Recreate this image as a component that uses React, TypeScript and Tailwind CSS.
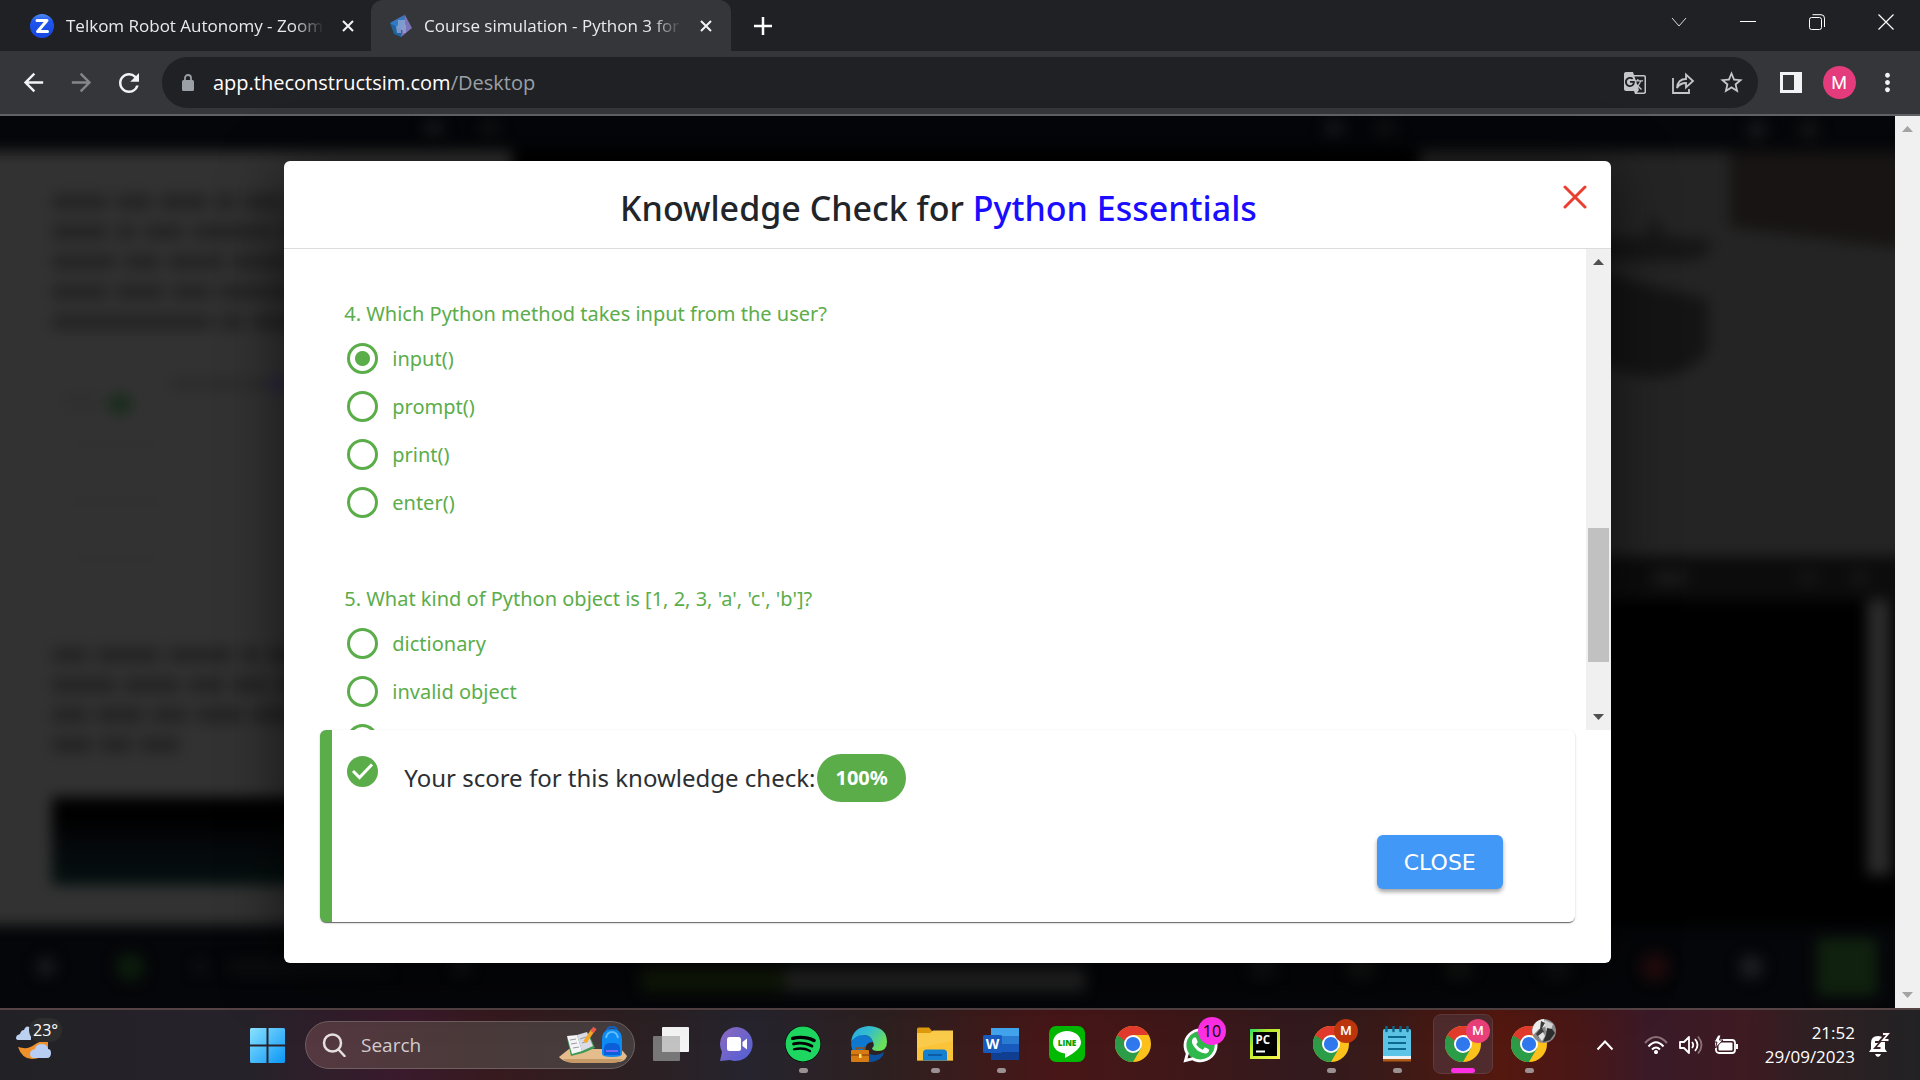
import React, { useState } from "react";
import {
  MdArrowBack,
  MdArrowForward,
  MdGTranslate,
  MdMoreVert,
  MdRefresh,
  MdStarBorder,
} from "react-icons/md";
import { FaSpotify, FaWhatsapp } from "react-icons/fa";

/* ---------- Browser chrome ---------- */

function TabClose({ label }: { label: string }) {
  return (
    <button type="button" aria-label={label} className="flex h-6 w-6 shrink-0 items-center justify-center">
      <svg viewBox="0 0 12 12" className="h-3 w-3" stroke="#f1f3f4" strokeWidth="2" fill="none">
        <path d="M1 1l10 10M11 1L1 11" />
      </svg>
    </button>
  );
}

function ZoomIcon() {
  return (
    <svg viewBox="0 0 24 24" className="h-6 w-6 shrink-0">
      <defs>
        <linearGradient id="zoomBlue" x1="0" y1="0" x2="0" y2="1">
          <stop offset="0" stopColor="#4f8df5" />
          <stop offset="0.3" stopColor="#1f55ee" />
          <stop offset="1" stopColor="#1747e0" />
        </linearGradient>
      </defs>
      <circle cx="12" cy="12" r="12" fill="url(#zoomBlue)" />
      <path d="M7 6.500h10l-9.400 11H17.500" fill="none" stroke="#fff" strokeWidth="3" strokeLinejoin="round" strokeLinecap="round" />
    </svg>
  );
}

function ConstructIcon() {
  return (
    <svg viewBox="0 0 24 24" className="h-6 w-6 shrink-0">
      <path d="M1 9L17 0l-7 5z" fill="#8a5fb8" />
      <path d="M1 9L16 1l-2 19-2 3z" fill="#2f7cc4" />
      <path d="M16 1l7 13-11 9z" fill="#7b74b8" />
      <path d="M1 9l4 11 7 3 1-7z" fill="#1f639f" />
      <path d="M9 6h7v5h1v8h-3v-3h-2v3H8l-1-6 2-2z" fill="#8ea4d2" opacity="0.8" />
    </svg>
  );
}

function TabStrip() {
  return (
    <div className="flex h-[51px] bg-[#202124] text-[17px] text-[#e8eaed]">
      <div className="flex w-[371px] items-center pl-[30px] pr-[11px]">
        <ZoomIcon />
        <span className="ml-3 flex-1 overflow-hidden whitespace-nowrap [mask-image:linear-gradient(to_right,black_88%,transparent)]">
          Telkom Robot Autonomy - Zoom
        </span>
        <span className="ml-3 flex">
          <TabClose label="Close Zoom tab" />
        </span>
      </div>
      <div className="flex w-[360px] items-center rounded-t-xl bg-[#35363a] pl-[18px] pr-[13px]">
        <ConstructIcon />
        <span className="ml-[11px] flex-1 overflow-hidden whitespace-nowrap [mask-image:linear-gradient(to_right,black_88%,transparent)]">
          Course simulation - Python 3 for
        </span>
        <span className="ml-3 flex">
          <TabClose label="Close course tab" />
        </span>
      </div>
      <button type="button" aria-label="New tab" className="flex w-16 items-center justify-center">
        <svg viewBox="0 0 18 18" className="h-[18px] w-[18px]" stroke="#fff" strokeWidth="2.500" fill="none">
          <path d="M9 0v18M0 9h18" />
        </svg>
      </button>
      <div className="ml-auto flex h-11 items-center">
        <button type="button" aria-label="Search tabs" className="flex w-[68px] justify-center">
          <svg viewBox="0 0 16 16" className="h-4 w-4" stroke="#ddd" fill="none">
            <path d="M1 4l7 8 7-8" />
          </svg>
        </button>
        <button type="button" aria-label="Minimize" className="flex w-[69px] justify-center">
          <svg viewBox="0 0 16 16" className="h-4 w-4" stroke="#fff" fill="none">
            <path d="M0 7.500h16" />
          </svg>
        </button>
        <button type="button" aria-label="Restore" className="flex w-[69px] justify-center">
          <svg viewBox="0 0 16 16" className="h-4 w-4" stroke="#fff" fill="none">
            <rect x="0.500" y="3.500" width="12" height="12" rx="2" />
            <path d="M3.500 0.700h8.500a3.500 3.500 0 0 1 3.500 3.500V13" />
          </svg>
        </button>
        <button type="button" aria-label="Close window" className="flex w-[69px] justify-center">
          <svg viewBox="0 0 16 16" className="h-4 w-4" stroke="#fff" strokeWidth="1.200" fill="none">
            <path d="M0.500 0.500l15 15M15.500 0.500l-15 15" />
          </svg>
        </button>
      </div>
    </div>
  );
}

function Toolbar() {
  return (
    <div className="flex h-[65px] items-center border-b-2 border-[#606164] bg-[#35363a] pl-[9px]">
      <button type="button" aria-label="Back" className="flex w-12 justify-center text-[#f1f3f4]">
        <MdArrowBack size={29} />
      </button>
      <button type="button" aria-label="Forward" className="flex w-12 justify-center text-[#85868a]">
        <MdArrowForward size={29} />
      </button>
      <button type="button" aria-label="Reload" className="flex w-12 justify-center text-[#f1f3f4]">
        <MdRefresh size={30} />
      </button>
      <div className="ml-[9px] flex h-[51px] flex-1 items-center rounded-full bg-[#202124] pl-5 pr-[3px]">
        <svg viewBox="0 0 12 17" className="h-[17px] w-3">
          <rect y="6" width="12" height="11" rx="1.500" fill="#9aa0a6" />
          <path d="M3 7V4a3 3 0 0 1 6 0v3" fill="none" stroke="#9aa0a6" strokeWidth="1.800" />
        </svg>
        <span className="ml-[19px] flex-1 text-[20px] text-[#9aa0a6]">
          <span className="text-white">app.theconstructsim.com</span>/Desktop
        </span>
        <button type="button" aria-label="Translate" className="flex w-12 justify-center text-[#c4c6c9]">
          <MdGTranslate size={24} />
        </button>
        <button type="button" aria-label="Share" className="flex w-12 justify-center">
          <svg viewBox="0 0 24 24" className="h-6 w-6" fill="none" stroke="#c4c6c9" strokeWidth="1.800">
            <path d="M2 7v15h16v-4" />
            <path d="M6 17c.5-6 4-9 9-9V3.500l7 6.500-7 6.500V12c-4 0-7 1.500-9 5z" />
          </svg>
        </button>
        <button type="button" aria-label="Bookmark" className="flex w-12 justify-center text-[#c4c6c9]">
          <MdStarBorder size={27} />
        </button>
      </div>
      <button type="button" aria-label="Side panel" className="ml-[9px] flex w-12 justify-center">
        <svg viewBox="0 0 22 21" className="h-[21px] w-[22px]">
          <rect width="22" height="21" fill="#f1f3f4" />
          <rect x="3" y="3" width="11" height="15" fill="#35363a" />
        </svg>
      </button>
      <button type="button" aria-label="Profile" className="flex w-12 justify-center">
        <span className="flex h-[33px] w-[33px] items-center justify-center rounded-full bg-[#e33b7b] font-['Roboto','Noto_Sans',sans-serif] text-[18px] text-white">
          M
        </span>
      </button>
      <button type="button" aria-label="Menu" className="mr-[9px] flex w-12 justify-center text-[#f1f3f4]">
        <MdMoreVert size={29} />
      </button>
    </div>
  );
}

/* ---------- Scroll bar ---------- */

function Arrow({ up, color }: { up?: boolean; color: string }) {
  return (
    <svg viewBox="0 0 11 6" className="h-[6px] w-[11px]" fill={color}>
      <path d={up ? "M0 6L5.500 0L11 6z" : "M0 0L5.500 6L11 0z"} />
    </svg>
  );
}

function ScrollBar({ color, thumb }: { color: string; thumb?: boolean }) {
  return (
    <div className="flex w-[25px] shrink-0 flex-col items-center justify-between bg-[#f0f0f0] py-[10px]">
      <Arrow up color={color} />
      {thumb && (
        <div className="flex w-full flex-1 flex-col items-center px-0.5">
          <div className="grow-[263]" />
          <div className="w-full grow-[134] bg-[#c1c1c1]" />
          <div className="grow-[52]" />
        </div>
      )}
      <Arrow color={color} />
    </div>
  );
}

/* ---------- Dimmed course page behind the dialog ---------- */

function Words({ rows }: { rows: string[][] }) {
  return (
    <div className="flex flex-col gap-[14px]">
      {rows.map((row, i) => (
        <div key={i} className="flex gap-2">
          {row.map((w, j) => (
            <div key={j} className={"h-4 rounded bg-[#242424] " + w} />
          ))}
        </div>
      ))}
    </div>
  );
}

function Dot({ className }: { className: string }) {
  return <div className={"shrink-0 rounded-full " + className} />;
}

function CoursePage() {
  return (
    <div aria-hidden="true" className="col-start-1 row-start-1 overflow-hidden bg-[#050609]">
      <div className="flex h-full flex-col blur-[7px]">
        <div className="flex h-[35px] items-start pt-1">
          <div className="flex w-[512px] justify-end gap-9 pr-3">
            <Dot className="h-4 w-5 bg-[#16171a]" />
            <Dot className="h-4 w-5 bg-[#101113]" />
          </div>
          <div className="flex flex-1 justify-end gap-8 pr-6">
            <Dot className="h-4 w-5 bg-[#16171a]" />
            <Dot className="h-4 w-5 bg-[#101113]" />
          </div>
          <div className="flex w-[475px] justify-end gap-8 pr-[76px]">
            <Dot className="h-5 w-5 bg-[#16171a]" />
            <Dot className="h-5 w-5 bg-[#131416]" />
          </div>
        </div>
        <div className="flex flex-1">
          <div className="-ml-4 flex w-[528px] flex-col bg-[#323232] pl-[68px] pt-[43px]">
            <Words
              rows={[
                ["w-14", "w-9", "w-12", "w-5", "w-9", "w-20"],
                ["w-14", "w-5", "w-10", "w-20", "w-9", "w-12"],
                ["w-16", "w-9", "w-14", "w-14", "w-16"],
                ["w-14", "w-12", "w-10", "w-20", "w-16"],
                ["w-40", "w-6", "w-12", "w-9", "w-12"],
              ]}
            />
            <div className="mt-12 flex justify-end">
              <div className="h-3 w-24 bg-[#2c2c2c]" />
              <div className="h-3 w-[246px] bg-[#29253a]" />
            </div>
            <div className="flex pl-3 pt-1">
              <div className="mr-2 h-4 w-9 bg-[#2f2f2f]" />
              <Dot className="h-5 w-6 bg-[#182b1a]" />
            </div>
            <div className="ml-4 mt-7 flex flex-1 flex-col gap-14">
              <div className="h-0.5 w-24 bg-[#2d2d2d]" />
              <div className="h-0.5 w-24 bg-[#2c2c2c]" />
              <div className="h-0.5 w-24 bg-[#2d2d2d]" />
            </div>
            <Words
              rows={[
                ["w-9", "w-16", "w-16", "w-5", "w-20"],
                ["w-16", "w-14", "w-9", "w-9", "w-20"],
                ["w-9", "w-12", "w-9", "w-12", "w-14", "w-9"],
                ["w-10", "w-8", "w-10"],
              ]}
            />
            <div className="mb-10 mt-[44px] h-[88px] bg-gradient-to-b from-black via-[#05070a] to-[#04100f]" />
          </div>
          <div className="flex-1 bg-black" />
          <div className="-mr-4 flex w-[491px] flex-col">
            <svg viewBox="0 0 491 405" preserveAspectRatio="none" className="h-[405px] w-full">
              <rect width="491" height="405" fill="#242424" />
              <path d="M310 0H491V98L310 76z" fill="#171413" />
              <path d="M150 86h76l8-22 12 22 44 2v14l-20 8H150z" fill="#161616" />
              <path d="M160 112l60 20 68 16v52q-20 26-56 26-30 0-72-26z" fill="#141414" />
            </svg>
            <div className="flex h-[44px] items-center bg-[#0c0c0c] pl-[232px]">
              <Dot className="h-4 w-9 bg-[#191919]" />
              <Dot className="ml-[110px] h-4 w-5 bg-[#151515]" />
              <Dot className="ml-8 h-4 w-5 bg-[#151515]" />
            </div>
            <div className="flex flex-1 justify-end bg-black pr-5">
              <div className="h-[275px] w-6 bg-[#2b2b2b]" />
            </div>
          </div>
        </div>
        <div className="flex h-[83px] items-center">
          <Dot className="ml-9 h-5 w-5 bg-[#191a1d]" />
          <Dot className="ml-[60px] h-7 w-7 bg-[#0c1c0c]" />
          <div className="ml-[52px] h-3 w-2 bg-[#141518]" />
          <div className="ml-6 h-3 w-40 bg-[#0d0e10]" />
          <Dot className="ml-[64px] h-4 w-5 bg-[#141518]" />
          <div className="ml-[169px] mt-6 h-6 w-[144px] bg-[#121b08]" />
          <div className="mt-6 h-6 w-[300px] bg-[#262626]" />
          <div className="ml-auto flex items-center gap-[70px]">
            <Dot className="h-6 w-7 bg-[#121315]" />
            <Dot className="h-6 w-7 bg-[#141512]" />
            <Dot className="h-6 w-7 bg-[#141512]" />
            <Dot className="h-6 w-7 bg-[#121315]" />
            <Dot className="h-7 w-7 bg-[#210b0c]" />
            <Dot className="h-6 w-6 bg-[#1d1e21]" />
          </div>
          <div className="ml-[54px] mr-[18px] h-[58px] w-[60px] bg-[#10210f]" />
        </div>
      </div>
    </div>
  );
}

/* ---------- Quiz dialog ---------- */

type Question = { id: string; text: string; options: string[]; answer?: string };

const QUESTIONS: Question[] = [
  {
    id: "q4",
    text: "4. Which Python method takes input from the user?",
    options: ["input()", "prompt()", "print()", "enter()"],
    answer: "input()",
  },
  {
    id: "q5",
    text: "5. What kind of Python object is [1, 2, 3, 'a', 'c', 'b']?",
    options: ["dictionary", "invalid object", ""],
  },
];

function QuestionBlock({ q }: { q: Question }) {
  const [value, setValue] = useState(q.answer);
  return (
    <fieldset>
      <legend className="mb-1.5 text-[20px] leading-[30px]">{q.text}</legend>
      {q.options.map((o, i) => (
        <label key={i} className="flex h-12 items-center gap-[14px] pl-[3px] text-[20px] leading-[30px]">
          <input
            type="radio"
            name={q.id}
            aria-label={o || "Option " + (i + 1)}
            checked={value === o}
            onChange={() => setValue(o)}
            className="h-[31px] w-[31px] shrink-0 appearance-none rounded-full border-[3px] border-[#5bad4a] checked:bg-[radial-gradient(circle,#5bad4a_7px,transparent_8px)]"
          />
          {o}
        </label>
      ))}
    </fieldset>
  );
}

function QuizDialog() {
  return (
    <section
      role="dialog"
      aria-labelledby="quiz-title"
      className="z-10 col-start-1 row-start-1 flex h-[90%] w-[70%] flex-col self-center justify-self-center overflow-hidden rounded-md bg-white font-['Noto_Sans',sans-serif] shadow-[0_10px_60px_rgba(0,0,0,0.6)]"
    >
      <header className="grid h-[88px] shrink-0 items-center border-b border-[#dcdcdc] pr-6">
        <h2 id="quiz-title" className="col-start-1 row-start-1 mt-2 pl-1.5 text-center text-[34px] font-medium leading-[48px] text-[#212529]">
          Knowledge Check for <span className="text-[#1a0dff]">Python Essentials</span>
        </h2>
        <button type="button" aria-label="Close dialog" className="col-start-1 row-start-1 mt-6 self-start justify-self-end">
          <svg viewBox="0 0 24 24" className="h-6 w-6" stroke="#ea3f2e" strokeWidth="3" strokeLinecap="round" fill="none">
            <path d="M2 2l20 20M22 2L2 22" />
          </svg>
        </button>
      </header>
      <div className="flex min-h-0 flex-1">
        <div className="flex flex-1 flex-col gap-[57px] overflow-hidden pl-[60px] pt-[50px] text-[#5bad4a]">
          {QUESTIONS.map((q) => (
            <QuestionBlock key={q.id} q={q} />
          ))}
        </div>
        <ScrollBar color="#505050" thumb />
      </div>
      <div className="mx-9 mb-[41px] shrink-0 rounded-md border-l-[12px] border-[#5bad4a] bg-white pb-[33px] pl-[15px] pr-[72px] pt-6 shadow-[0_2px_1px_-1px_rgba(0,0,0,0.4),0_1px_1px_0_rgba(0,0,0,0.24),0_1px_3px_0_rgba(0,0,0,0.12)]">
        <div className="flex">
          <svg viewBox="0 0 31 31" className="mt-0.5 h-[31px] w-[31px] shrink-0">
            <circle cx="15.500" cy="15.500" r="15.500" fill="#5bad4a" />
            <path d="M6 15l6.500 6.500L25 8.500" fill="none" stroke="#fff" strokeWidth="3" />
          </svg>
          <p className="ml-[26px] text-[24px] leading-[48px] text-[#2b2f33]">Your score for this knowledge check:</p>
          <span className="ml-0.5 rounded-full bg-[#5bad4a] px-[18px] text-[20px] font-bold leading-[48px] text-white">100%</span>
        </div>
        <div className="mt-[33px] flex justify-end">
          <button
            type="button"
            className="h-[54px] rounded-md bg-[#4198f7] px-[27px] font-['DejaVu_Sans',sans-serif] text-[22px] text-white shadow-[0_3px_4px_rgba(0,0,0,0.35)]"
          >
            CLOSE
          </button>
        </div>
      </div>
    </section>
  );
}

/* ---------- Taskbar ---------- */

function ChromeLogo() {
  return (
    <svg viewBox="0 0 48 48" className="h-9 w-9">
      <circle cx="24" cy="24" r="24" fill="#fcc21b" />
      <path d="M3.200 12A24 24 0 0 0 24 48L34.400 30 24 24z" fill="#2b9c48" />
      <path d="M3.200 12A24 24 0 0 1 44.800 12H24L13.600 30z" fill="#e33b2e" />
      <path d="M3.200 12L13.600 30 24 36V28z" fill="#2b9c48" />
      <circle cx="24" cy="24" r="12" fill="#fff" />
      <circle cx="24" cy="24" r="9.500" fill="#2f78ee" />
    </svg>
  );
}

function AppTile({
  label,
  running,
  active,
  badge,
  children,
}: {
  label: string;
  running?: boolean;
  active?: boolean;
  badge?: React.ReactNode;
  children: React.ReactNode;
}) {
  return (
    <button type="button" aria-label={label} className="flex w-[66px] justify-center self-stretch pb-1.5 pt-1">
      <span
        className={
          active
            ? "relative flex w-[60px] flex-col items-center justify-between rounded-lg border border-[#633a3c] bg-[#4f2b2d] pt-[11px]"
            : "relative flex w-[60px] flex-col items-center justify-between border border-transparent pt-[11px]"
        }
      >
        {children}
        {badge}
        {active ? (
          <span className="h-[5px] w-6 rounded-full bg-[#ff2fe6]" />
        ) : (
          <span className={running ? "h-[5px] w-[9px] rounded-full bg-[#9c9192]" : "h-[5px] w-[9px]"} />
        )}
      </span>
    </button>
  );
}

function ProfileBadge({ className }: { className: string }) {
  return (
    <span
      className={
        "absolute right-0.5 top-1 flex h-6 w-6 items-center justify-center rounded-full font-['Roboto',sans-serif] text-[13px] font-medium text-white " +
        className
      }
    >
      M
    </span>
  );
}

function Weather() {
  return (
    <button type="button" className="relative ml-3.5 h-11 w-[50px]" aria-label="Weather 23 degrees">
      <svg viewBox="0 0 50 44" className="h-11 w-[50px]">
        <path d="M5 24h12V12q-5-4-7 2-3 0-4 4-4 1-4 4 0 2 3 2z" fill="#bcd0f0" />
        <path d="M4 31q10 3 16-2 5-4 14-5V34q-6 9-16 9T4 31z" fill="#f0902a" />
        <path d="M20 42q-4 0-4-4t5-5q1-5 7-5 5 0 6 5 3 0 3 4 0 5-4 5z" fill="#b7cdf3" />
      </svg>
      <span className="absolute left-[15px] top-0.5 rounded-xl bg-[#2e2d2d] px-1 text-[16px] leading-6 text-white">23°</span>
    </button>
  );
}

function SearchArt() {
  return (
    <svg viewBox="0 0 68 38" className="h-[38px] w-[68px]">
      <path d="M0 31L10 23H62L68 30Q66 36 58 36H12Q4 36 0 31z" fill="#e5bd8d" />
      <path d="M4 33H64Q60 37 54 37H14Q8 37 4 33z" fill="#c69a66" />
      <path d="M8 12L20 9 30 8 36 22 24 27 12 30z" fill="#3c9a55" />
      <path d="M8 10L18 9 23 25 13 28z" fill="#f5f5f7" />
      <path d="M18 9L28 6 34 20 23 25z" fill="#dcdce6" />
      <path d="M11 14l6-1M12 18l6-1M14 22l6-1M21 13l6-2M23 17l6-2" stroke="#9a9aa8" strokeWidth="1" />
      <path d="M34 4l-8 12" stroke="#f6a928" strokeWidth="4" />
      <path d="M36 2l-3 4" stroke="#ee5a4c" strokeWidth="4" />
      <path d="M48 5q0-4 5-4t5 4" fill="none" stroke="#1562c8" strokeWidth="2" />
      <path d="M43 14Q43 3 53 3T63 14V28Q63 31 53 31T43 28z" fill="#0f8bf4" />
      <path d="M47 12Q48 6 53 6T59 12" fill="none" stroke="#5cc0ff" strokeWidth="2" />
      <path d="M45 22q0-5 8-5t8 5v7H45z" fill="#0b5fd8" />
      <path d="M47 25h12" stroke="#9d6bff" strokeWidth="1.500" />
    </svg>
  );
}

function Taskbar() {
  return (
    <footer className="flex h-[72px] shrink-0 items-center border-t-2 border-[#554345] bg-[linear-gradient(90deg,#222226_0%,#26222a_13%,#3a1a2c_21%,#361a1e_26%,#2c2022_33%,#26242e_39%,#2e2020_46%,#481617_55%,#401718_61%,#321a1e_68%,#3a1a18_72%,#54180f_78%,#4a1716_82%,#3a1a28_86%,#3e1a22_91%,#2f1f22_94%,#222224_100%)] text-white">
      <div className="flex w-[234px] shrink-0 self-start pt-[6px]">
        <Weather />
      </div>
      <button type="button" aria-label="Start" className="flex w-[66px] justify-center">
        <svg viewBox="0 0 35 35" className="h-[35px] w-[35px]">
          <defs>
            <linearGradient id="win" x1="0" y1="0" x2="1" y2="1">
              <stop offset="0" stopColor="#8ae2ff" />
              <stop offset="1" stopColor="#0a96f6" />
            </linearGradient>
          </defs>
          <path d="M1 0H16.500V16.500H0V1zM18.500 0H34L35 1V16.500H18.500zM0 18.500H16.500V35H1L0 34zM18.500 18.500H35V34L34 35H18.500z" fill="url(#win)" />
        </svg>
      </button>
      <label className="ml-[5px] mr-[3px] flex h-12 w-[330px] items-center rounded-full border border-[#6f5f61] bg-[linear-gradient(90deg,#553841,#4b3a3a_50%,#443d3e)] pl-4 pr-[7px]">
        <svg viewBox="0 0 24 24" className="h-6 w-6 shrink-0" fill="none" stroke="#e6e0e1" strokeWidth="2.500">
          <circle cx="10.500" cy="10" r="8.500" />
          <path d="M16.500 16.500l6 6.500" strokeLinecap="round" />
        </svg>
        <input
          type="text"
          aria-label="Search"
          placeholder="Search"
          className="ml-[15px] min-w-0 flex-1 bg-transparent text-[19px] text-white outline-none placeholder:text-[#d2cccd]"
        />
        <SearchArt />
      </label>
      <AppTile label="Task view">
        <svg viewBox="0 0 36 36" className="h-9 w-9">
          <rect x="9" y="1" width="27" height="25" rx="1" fill="#f4f4f4" />
          <rect x="0" y="10" width="27" height="25" rx="1" fill="#777" />
          <path d="M9 10H27V26H9z" fill="#c2c2c2" />
        </svg>
      </AppTile>
      <AppTile label="Chat">
        <svg viewBox="0 0 36 36" className="h-9 w-9">
          <defs>
            <linearGradient id="chat" x1="0" y1="0" x2="1" y2="1">
              <stop offset="0" stopColor="#8f6ac0" />
              <stop offset="1" stopColor="#4f5fd6" />
            </linearGradient>
          </defs>
          <path d="M18 1A17 17 0 1 1 11 34L1 35 3 26A17 17 0 0 1 18 1z" fill="url(#chat)" />
          <rect x="8" y="11" width="14" height="14" rx="2.500" fill="#fff" />
          <path d="M23.500 16l4.500-3.500v11L23.500 20z" fill="#fff" />
        </svg>
      </AppTile>
      <AppTile label="Spotify" running>
        <span className="rounded-full bg-black">
          <FaSpotify size={36} className="text-[#1ed760]" />
        </span>
      </AppTile>
      <AppTile label="Edge">
        <svg viewBox="0 0 36 36" className="h-9 w-9">
          <defs>
            <linearGradient id="edge" x1="0" y1="0" x2="1" y2="0.500">
              <stop offset="0" stopColor="#2aa9e8" />
              <stop offset="0.500" stopColor="#35c1d0" />
              <stop offset="1" stopColor="#6be05a" />
            </linearGradient>
          </defs>
          <path d="M0 18Q2 8 13 9q8 1 9 7-5 0-7 4-2 7 5 11l8 1q-5 4-11 4Q2 34 0 18z" fill="#0f78d0" />
          <path d="M14 20q1 9 10 9 5 0 9-3-2 10-16 10Q8 30 14 20z" fill="#0c4f9c" />
          <path d="M0 17Q1 1 18 0q18 1 18 16 0 9-9 9-6 0-6-3 3-2 1-6-2-7-9-7Q3 9 0 17z" fill="url(#edge)" />
          <rect x="0" y="24" width="18" height="12" rx="1" fill="#d67a12" />
          <path d="M5 24v-2h8v2M0 29h18" stroke="#9a4e06" strokeWidth="1.500" fill="none" />
          <rect x="8" y="28" width="2.500" height="4" fill="#ffdf70" />
        </svg>
      </AppTile>
      <AppTile label="File Explorer" running>
        <svg viewBox="0 0 36 36" className="h-9 w-9">
          <path d="M0 3q0-1.500 1.500-1.500H12L15 5v5H0z" fill="#e09a0c" />
          <path d="M0 7H13L16 4.500H36V34.500H0z" fill="#fbcb4b" />
          <path d="M0 22L36 15V34.500H0z" fill="#fbbf2c" opacity="0.600" />
          <path d="M6 34.500V27q0-3.500 3.500-3.500h17Q30 23.500 30 27v7.500z" fill="#1680d0" />
          <path d="M11 29H25" stroke="#0b58a0" strokeWidth="1.800" />
        </svg>
      </AppTile>
      <AppTile label="Word" running>
        <svg viewBox="0 0 36 36" className="h-9 w-9">
          <path d="M8 2H36V10H8z" fill="#41a5ee" />
          <path d="M8 10H36V18H8z" fill="#2b7cd3" />
          <path d="M8 18H36V26H8z" fill="#185abd" />
          <path d="M8 26H36V34H8z" fill="#103f91" />
          <rect y="9" width="19" height="18" rx="1.500" fill="#185abd" />
          <text x="9.500" y="23" textAnchor="middle" fontFamily="Open Sans" fontWeight="700" fontSize="14" fill="#fff">W</text>
        </svg>
      </AppTile>
      <AppTile label="LINE messenger">
        <svg viewBox="0 0 36 36" className="h-9 w-9">
          <rect width="36" height="36" rx="7" fill="#00b900" />
          <path d="M18 5C10 5 4 10 4 16.500c0 6 5 10 12 11v4.500C22 29 32 23 32 16.500 32 10 26 5 18 5z" fill="#fff" />
          <text x="18" y="20" textAnchor="middle" fontFamily="Open Sans" fontWeight="800" fontSize="8" fill="#00a000">LINE</text>
        </svg>
      </AppTile>
      <AppTile label="Chrome">
        <ChromeLogo />
      </AppTile>
      <AppTile
        label="WhatsApp"
        badge={
          <span className="absolute right-0.5 top-0.5 flex h-7 w-7 items-center justify-center rounded-full bg-[#ff2fe6] text-[16px] text-black">
            10
          </span>
        }
      >
        <span className="relative grid h-9 w-9 place-items-center">
          <span className="col-start-1 row-start-1 h-[30px] w-[30px] rounded-full bg-[#2fb84c]" />
          <FaWhatsapp size={39} className="col-start-1 row-start-1 text-white" />
        </span>
      </AppTile>
      <AppTile label="PyCharm">
        <svg viewBox="0 0 36 36" className="h-9 w-9">
          <defs>
            <linearGradient id="pc" x1="0" y1="0" x2="1" y2="1">
              <stop offset="0" stopColor="#21e06a" />
              <stop offset="0.300" stopColor="#b6ea30" />
              <stop offset="1" stopColor="#fcf84a" />
            </linearGradient>
          </defs>
          <rect x="3" y="3" width="30" height="30" fill="url(#pc)" />
          <rect x="6" y="6" width="24" height="24" fill="#000" />
          <text x="8.500" y="18" fontFamily="Open Sans" fontWeight="700" fontSize="11.500" fill="#fff">PC</text>
          <path d="M9 25.500h9" stroke="#fff" strokeWidth="2" />
        </svg>
      </AppTile>
      <AppTile label="Chrome profile" running badge={<ProfileBadge className="bg-[#bf360c]" />}>
        <ChromeLogo />
      </AppTile>
      <AppTile label="Notepad" running>
        <svg viewBox="0 0 36 36" className="h-9 w-9">
          <rect x="4" y="3" width="28" height="29" rx="1.500" fill="#5cc4e6" />
          <path d="M4 30H32V33H4z" fill="#eef2f4" />
          <path d="M4 33H32V35.500H4z" fill="#b05a16" />
          <path d="M7.500 1v4M14.500 1v4M21.500 1v4M28.500 1v4" stroke="#0b6a8e" strokeWidth="2.500" strokeLinecap="round" />
          <path d="M9 11H27M9 17H27M9 23H27" stroke="#0b6a8e" strokeWidth="2" />
        </svg>
      </AppTile>
      <AppTile label="Chrome active profile" active badge={<ProfileBadge className="bg-[#ec407a]" />}>
        <ChromeLogo />
      </AppTile>
      <AppTile
        label="Chrome photo profile"
        running
        badge={
          <svg viewBox="0 0 24 24" className="absolute right-0.5 top-1 h-6 w-6">
            <circle cx="12" cy="12" r="12" fill="#8c8c8c" />
            <path d="M12 0a12 12 0 0 0-11 16l6-6 7-3z" fill="#f2f2f2" />
            <path d="M13 1l8 4-2 6-5 1-1-6z" fill="#d8d8d8" />
            <path d="M9 2l4 2-3 5 2 4-5 6-3-4 4-5z" fill="#3d3d3d" />
            <path d="M15 9l5 1 3 4-5 7-7 2 3-7z" fill="#2e2e2e" />
            <path d="M6 17l5-4 2 4-3 5z" fill="#e4e4e4" />
          </svg>
        }
      >
        <ChromeLogo />
      </AppTile>
      <div className="ml-auto flex items-center pr-[29px]">
        <button type="button" aria-label="Hidden icons" className="mr-[30px]">
          <svg viewBox="0 0 18 12" className="h-3 w-[18px]" fill="none" stroke="#fff" strokeWidth="2">
            <path d="M1.500 10.500L9 2.500l7.500 8" />
          </svg>
        </button>
        <button type="button" aria-label="Network, volume and battery" className="flex items-center gap-[11px]">
          <svg viewBox="0 0 24 20" className="h-5 w-6" fill="none" stroke="#fff" strokeWidth="2">
            <path d="M1 8Q12-4 23 8" stroke="#8a7076" />
            <path d="M4.500 11.500Q12 3 19.500 11.500M8 14.500q4-4 8 0" />
            <circle cx="12" cy="17.500" r="1.500" fill="#fff" stroke="none" />
            <circle cx="12" cy="17" r="1" />
          </svg>
          <svg viewBox="0 0 24 20" className="h-5 w-6" fill="none" stroke="#fff" strokeWidth="1.800">
            <path d="M1 7h4l5-5v16l-5-5H1z" strokeLinejoin="round" />
            <path d="M13 7q2.500 3 0 6M16 4q5 6 0 12" />
            <path d="M19 1.500q7 8.500 0 17" stroke="#8a7076" />
          </svg>
          <svg viewBox="0 0 25 20" className="h-5 w-[25px]">
            <rect x="2" y="5" width="19" height="13" rx="3" fill="none" stroke="#fff" strokeWidth="1.800" />
            <rect x="4.500" y="7.500" width="14" height="8" rx="1" fill="#fff" />
            <path d="M22 9h2v5h-2z" fill="#fff" />
            <path d="M4 0L0 7h3l-1.500 6L9 5H5.500L7 0z" fill="#fff" stroke="#3a1a28" strokeWidth="1" />
          </svg>
        </button>
        <div className="ml-[26px] text-right text-[17px] leading-6">
          <div>21:52</div>
          <div>29/09/2023</div>
        </div>
        <button type="button" aria-label="Notifications" className="ml-3">
          <svg viewBox="0 0 24 26" className="h-[26px] w-6">
            <path d="M2 20L4 17V11Q4 4 11 4t7 7v6l2 3zM8 22h6q-1 3-3 3t-3-3z" fill="#fff" />
            <path d="M8 10h5l-5 6h5.500" fill="none" stroke="#3a2226" strokeWidth="1.800" />
            <path d="M15 1h6l-6 7h6.500" fill="none" stroke="#3a2226" strokeWidth="4" />
            <path d="M16 2h5l-5 6h5.500" fill="none" stroke="#fff" strokeWidth="1.800" />
          </svg>
        </button>
      </div>
    </footer>
  );
}

export default function App() {
  return (
    <div className="flex h-screen flex-col overflow-hidden font-['Open_Sans','Noto_Sans',sans-serif]">
      <div className="shrink-0">
        <TabStrip />
        <Toolbar />
      </div>
      <main className="flex min-h-0 flex-1">
        <div className="grid min-w-0 flex-1 grid-cols-1 grid-rows-1">
          <CoursePage />
          <QuizDialog />
        </div>
        <ScrollBar color="#a3a3a3" />
      </main>
      <Taskbar />
    </div>
  );
}
